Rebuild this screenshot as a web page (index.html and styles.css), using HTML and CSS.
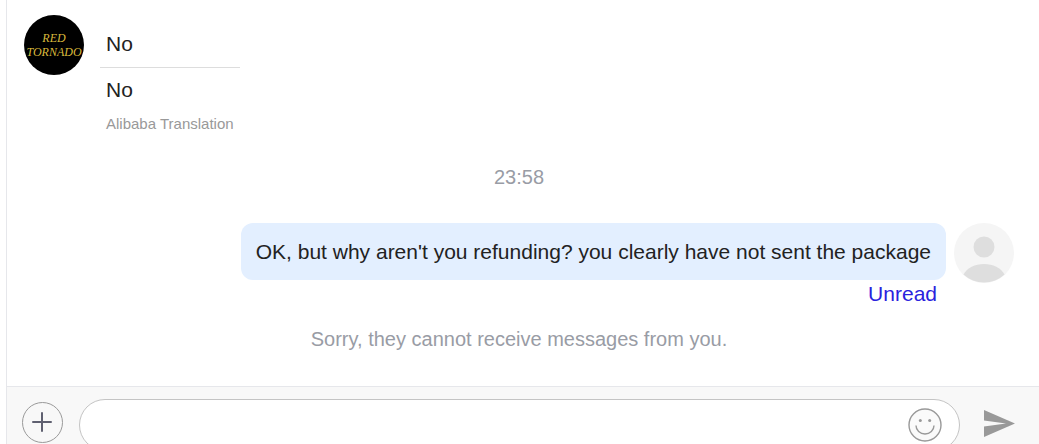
FILE: index.html
```html
<!DOCTYPE html>
<html lang="en">
<head>
  <meta charset="UTF-8">
  <meta name="viewport" content="width=device-width, initial-scale=1.0">
  <title>Chat</title>
  <link rel="stylesheet" href="styles.css">
</head>
<body>
  <div class="chat">
    <div class="messages">
      <div class="message received">
        <svg class="avatar" viewBox="0 0 60 60" role="img" aria-label="Red Tornado">
          <circle cx="30" cy="30" r="30" fill="#000"/>
          <text class="logo-text" x="30" y="27">RED</text>
          <text class="logo-text" x="30" y="41">TORNADO</text>
        </svg>
        <div class="bubble">
          <p class="original">No</p>
          <p class="translated">No</p>
          <p class="source">Alibaba Translation</p>
        </div>
      </div>

      <div class="time">23:58</div>

      <div class="message sent">
        <div class="content">
          <div class="bubble">OK, but why aren't you refunding? you clearly have not sent the package</div>
          <div class="status">Unread</div>
        </div>
        <svg class="avatar" viewBox="0 0 60 60" aria-hidden="true">
          <circle cx="30" cy="30" r="30" fill="#f5f5f5"/>
          <circle cx="30" cy="24" r="10.5" fill="#dedede"/>
          <path d="M9.5 51.5C13 45 21 41 30 41s17 4 20.5 10.5A30 30 0 0 1 9.5 51.5z" fill="#dedede"/>
        </svg>
      </div>

      <div class="notice">Sorry, they cannot receive messages from you.</div>
    </div>

    <form class="composer">
      <button type="button" class="add" aria-label="Add attachment">
        <svg viewBox="0 0 41 41" width="41" height="41">
          <circle cx="20.5" cy="20.5" r="20" fill="none" stroke="#999" stroke-width="1"/>
          <path d="M20 11v18M11 20h18" stroke="#5f6070" stroke-width="2" stroke-linecap="round"/>
        </svg>
      </button>
      <div class="field">
        <input type="text" class="text" aria-label="Message">
        <button type="button" class="emoji" aria-label="Emoji">
          <svg viewBox="0 0 34 34" width="34" height="34">
            <circle cx="17" cy="17" r="16" fill="#fafafa" stroke="#999" stroke-width="1.4"/>
            <circle cx="12.3" cy="12.5" r="1.5" fill="#999"/>
            <circle cx="21.7" cy="12.5" r="1.5" fill="#999"/>
            <path d="M8 17.5a9 8.5 0 0 0 18 0" fill="none" stroke="#999" stroke-width="1.4"/>
          </svg>
        </button>
      </div>
      <button type="submit" class="send" aria-label="Send">
        <svg viewBox="0 0 31 27" width="31" height="27">
          <path d="M0 0l31 13.5L0 27v-10.5l22-3L0 10.5z" fill="#999"/>
        </svg>
      </button>
    </form>
  </div>
</body>
</html>
```
FILE: styles.css
```css
* {
  box-sizing: border-box;
}
body {
  margin: 0;
  height: 100vh;
  overflow: hidden;
  background-color: #fff;
  font-family: "Liberation Sans", Arial, sans-serif;
  font-size: 21px;
  line-height: 24px;
  color: #222;
}
p {
  margin: 0;
}
button {
  display: flex;
  padding: 0;
  border: none;
  background: none;
  cursor: pointer;
}
.chat {
  margin-left: 6px;
  border-left: 1px solid #e6e7eb;
}
.messages {
  display: flex;
  flex-direction: column;
  padding: 15px 25px 35px 17px;
}
.message {
  display: flex;
}
.avatar {
  flex: none;
  width: 60px;
  height: 60px;
}
.logo-text {
  font-family: "Liberation Serif", serif;
  font-size: 12px;
  font-style: italic;
  text-anchor: middle;
  fill: #d9b93c;
}
.received {
  gap: 16px;
}
.received .bubble {
  width: 140px;
}
.received p {
  padding: 0 6px;
}
.received .original {
  padding: 17px 6px 11px;
  border-bottom: 1px solid #ddd;
}
.received .translated {
  padding-top: 10px;
}
.received .source {
  padding-top: 10px;
  font-size: 15px;
  white-space: nowrap;
  color: #999;
}
.time,
.notice {
  font-size: 20px;
  text-align: center;
  color: #999ca5;
}
.time {
  margin: 29px 0 34px;
}
.sent {
  justify-content: flex-end;
  gap: 8px;
}
.sent .bubble {
  padding: 17px 15px 16px;
  border-radius: 12px;
  background-color: #e3efff;
}
.status {
  padding: 2px 9px 0;
  text-align: right;
  color: #2a22dd;
}
.notice {
  margin-top: 21px;
}
.composer {
  display: flex;
  gap: 16px;
  padding: 12px 24px 12px 15px;
  border-top: 1px solid #e6e7eb;
  background-color: #f8f8f8;
}
.add {
  margin-top: 3px;
  align-self: flex-start;
}
.field {
  flex: 1;
  display: flex;
  align-items: center;
  height: 52px;
  padding: 0 17px 0 24px;
  border: 1px solid #c4c4c4;
  border-radius: 26px;
  background-color: #fff;
}
.text {
  flex: 1;
  min-width: 0;
  border: none;
  outline: none;
  background: none;
  font: inherit;
  color: inherit;
}
.send {
  margin: 11px 0 0 8px;
  align-self: flex-start;
}
```
